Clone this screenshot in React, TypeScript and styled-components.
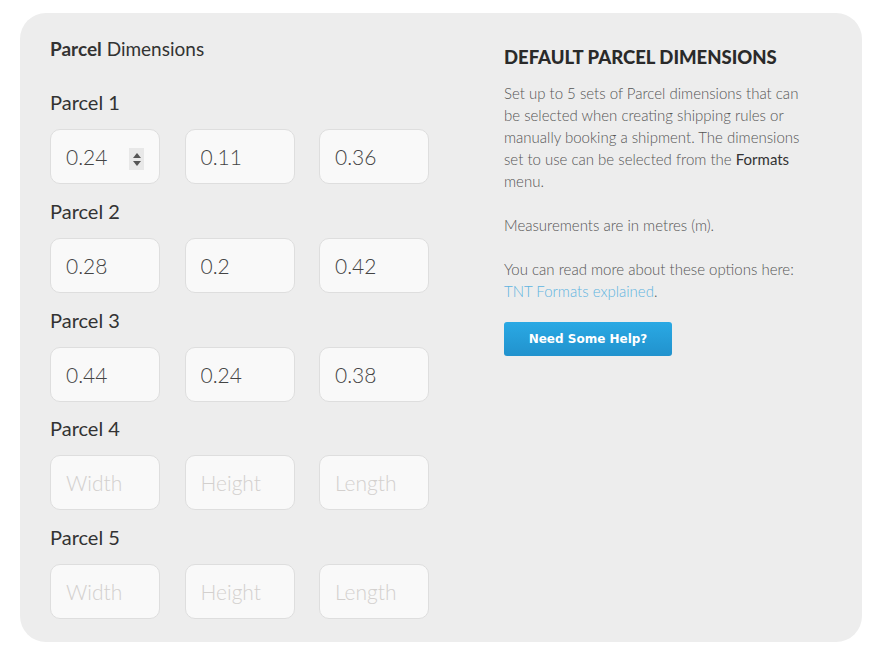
import styled, { createGlobalStyle } from "styled-components";

const GlobalStyle = createGlobalStyle`
  body {
    margin: 0;
    background: #ffffff;
    font-family: "Lato", "Open Sans", sans-serif;
  }
`;

const Page = styled.div`
  padding: 13px 0 0 20px;
`;

const Panel = styled.div`
  width: 842px;
  height: 629px;
  box-sizing: border-box;
  background: #ededed;
  border-radius: 26px;
  padding: 24px 30px 0 30px;
  display: grid;
  grid-template-columns: 379px 312px;
  column-gap: 75px;
`;

const LeftColumn = styled.div`
  display: flex;
  flex-direction: column;
`;

const Title = styled.h2`
  margin: 0 0 29px 0;
  font-size: 19px;
  font-weight: 400;
  color: #333;
  line-height: 24px;
`;

const Strong = styled.span`
  font-weight: 700;
`;

const ParcelBlock = styled.div`
  display: flex;
  flex-direction: column;
  margin-bottom: 14.75px;
`;

const ParcelLabel = styled.div`
  font-size: 20px;
  color: #333;
  line-height: 24px;
  margin-bottom: 15px;
`;

const InputRow = styled.div`
  display: grid;
  grid-template-columns: repeat(3, 110px);
  column-gap: 24.5px;
`;

const FieldWrap = styled.div`
  position: relative;
`;

const Field = styled.input`
  box-sizing: border-box;
  width: 110px;
  height: 55px;
  border: 1px solid #dedede;
  border-radius: 10px;
  background: #f9f9f9;
  padding: 0 0 0 15px;
  font-family: "Lato", "Open Sans", sans-serif;
  font-weight: 300;
  font-size: 21px;
  color: #444;
  outline: none;

  &::placeholder {
    color: #d3d0ce;
  }
`;

const Spinner = styled.span`
  position: absolute;
  left: 79px;
  top: 19px;
  width: 15px;
  height: 22px;
  background: #e8e8e8;
  display: flex;
  flex-direction: column;
  align-items: center;
  justify-content: center;
  gap: 3px;
`;

const RightColumn = styled.div`
  padding-top: 7px;
`;

const Heading = styled.h3`
  margin: 0 0 12px 0;
  font-size: 18.5px;
  font-weight: 900;
  color: #2a2a2a;
  line-height: 26px;
`;

const Paragraph = styled.p`
  margin: 0 0 22px 0;
  font-size: 15px;
  font-weight: 300;
  line-height: 22px;
  color: #555;
`;

const Em = styled.span`
  font-weight: 400;
  color: #333;
`;

const Link = styled.a`
  color: #5fb4e0;
  text-decoration: none;
`;

const HelpButton = styled.button`
  margin-top: -2px;
  width: 168px;
  height: 34px;
  border: none;
  border-radius: 3px;
  background: linear-gradient(#2aa9e4, #2192cd);
  color: #fff;
  font-family: "DejaVu Sans", Verdana, sans-serif;
  font-weight: 700;
  font-size: 12px;
  cursor: pointer;
`;

type Parcel = { values: [string, string, string] };

const parcels: Parcel[] = [
  { values: ["0.24", "0.11", "0.36"] },
  { values: ["0.28", "0.2", "0.42"] },
  { values: ["0.44", "0.24", "0.38"] },
  { values: ["", "", ""] },
  { values: ["", "", ""] },
];

const placeholders = ["Width", "Height", "Length"];

function SpinArrows() {
  return (
    <Spinner>
      <svg width="8" height="5" viewBox="0 0 8 5">
        <path d="M0 5 L4 0 L8 5 Z" fill="#555" />
      </svg>
      <svg width="8" height="5" viewBox="0 0 8 5">
        <path d="M0 0 L4 5 L8 0 Z" fill="#555" />
      </svg>
    </Spinner>
  );
}

export default function App() {
  return (
    <Page>
      <GlobalStyle />
      <Panel>
        <LeftColumn>
          <Title>
            <Strong>Parcel</Strong> Dimensions
          </Title>
          {parcels.map((p, i) => (
            <ParcelBlock key={i}>
              <ParcelLabel>Parcel {i + 1}</ParcelLabel>
              <InputRow>
                {p.values.map((v, j) => (
                  <FieldWrap key={j}>
                    <Field defaultValue={v} placeholder={placeholders[j]} />
                    {i === 0 && j === 0 && <SpinArrows />}
                  </FieldWrap>
                ))}
              </InputRow>
            </ParcelBlock>
          ))}
        </LeftColumn>
        <RightColumn>
          <Heading>DEFAULT PARCEL DIMENSIONS</Heading>
          <Paragraph>
            Set up to 5 sets of Parcel dimensions that can be selected when
            creating shipping rules or manually booking a shipment. The
            dimensions set to use can be selected from the <Em>Formats</Em>{" "}
            menu.
          </Paragraph>
          <Paragraph>Measurements are in metres (m).</Paragraph>
          <Paragraph>
            You can read more about these options here:{" "}
            <Link href="#">TNT Formats explained</Link>.
          </Paragraph>
          <HelpButton>Need Some Help?</HelpButton>
        </RightColumn>
      </Panel>
    </Page>
  );
}
